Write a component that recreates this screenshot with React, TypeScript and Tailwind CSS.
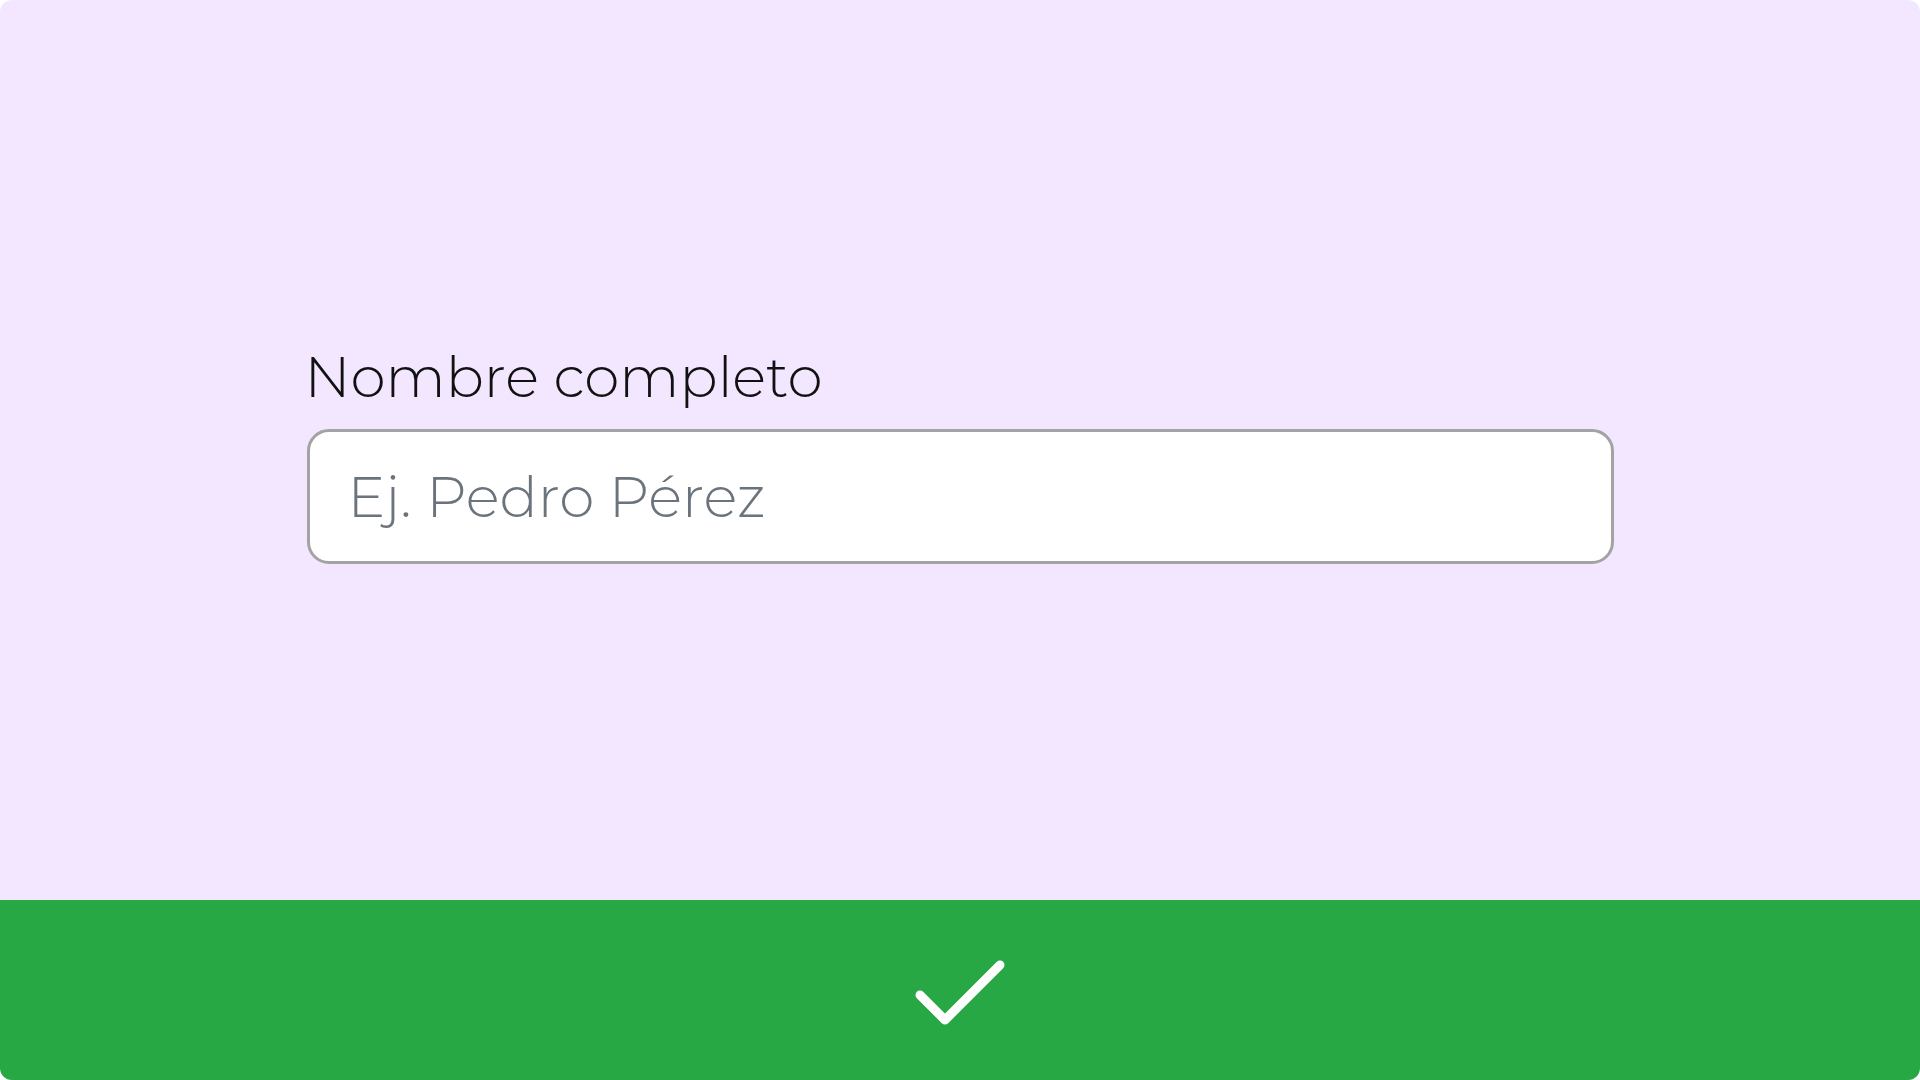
import { Check } from "lucide-react";

export default function App() {
  return (
    <div className="flex h-screen w-full flex-col overflow-hidden rounded-xl bg-[#f3e6ff] font-['Montserrat','Inter',sans-serif]">
      <main className="flex flex-1 items-center justify-center pt-[8px]">
        <div className="flex w-[1307px] flex-col gap-[20px]">
          <label
            htmlFor="fullName"
            className="-ml-[2px] text-[56.5px] font-[350] leading-[64px] text-[#111111]"
          >
            Nombre completo
          </label>
          <input
            id="fullName"
            type="text"
            placeholder="Ej. Pedro Pérez"
            className="h-[135px] w-full rounded-[22px] border-[3px] border-[#a3a3a3] bg-white px-[38px] text-[56.5px] font-[350] text-[#111111] outline-none placeholder:text-[#6b737d]"
          />
        </div>
      </main>
      <button
        type="button"
        className="flex h-[180px] w-full shrink-0 items-center justify-center bg-[#28a745]"
        aria-label="Confirmar"
      >
        <Check className="mt-[10px] h-[120px] w-[120px] text-white" strokeWidth={1.8} />
      </button>
    </div>
  );
}
